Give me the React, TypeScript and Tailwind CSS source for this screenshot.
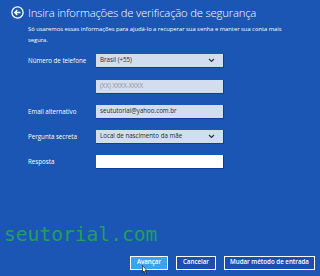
const font = { fontFamily: '"Open Sans", "Noto Sans", sans-serif' };

function Chevron() {
  return (
    <svg width="7" height="5" viewBox="0 0 7 5" className="shrink-0">
      <path d="M1 1 L3.5 3.5 L6 1" fill="none" stroke="#333" strokeWidth="1.2" />
    </svg>
  );
}

function Field({ value, placeholder, select, white }: { value?: string; placeholder?: string; select?: boolean; white?: boolean }) {
  return (
    <div
      className={`w-[128px] h-[14px] flex items-center justify-between pl-[4px] pr-[8px] border-b border-r border-[#0d3c99] ${
        white ? "bg-white" : "bg-[#d2ddf0]"
      }`}
    >
      <span className={`text-[6.2px] leading-none ${placeholder ? "text-[#8a8f99]" : "text-[#2a2a2a]"}`}>
        {value ?? placeholder}
      </span>
      {select && <Chevron />}
    </div>
  );
}

export default function App() {
  const rows: { label: string; field: JSX.Element; mt: string }[] = [
    { label: "Número de telefone", field: <Field value="Brasil (+55)" select />, mt: "mt-0" },
    { label: "", field: <Field placeholder="(XX) XXXX-XXXX" />, mt: "mt-[12px]" },
    { label: "Email alternativo", field: <Field value="seututorial@yahoo.com.br" />, mt: "mt-[11px]" },
    { label: "Pergunta secreta", field: <Field value="Local de nascimento da mãe" select />, mt: "mt-[11px]" },
    { label: "Resposta", field: <Field white />, mt: "mt-[11px]" },
  ];

  return (
    <div className="w-[320px] h-[276px] bg-[#1b56b4] text-white flex flex-col overflow-hidden" style={font}>
      {/* header */}
      <div className="flex items-center gap-[4px] pl-[11px] pt-[6px]">
        <svg width="13" height="13" viewBox="0 0 13 13" className="shrink-0">
          <circle cx="6.5" cy="6.5" r="5.6" fill="none" stroke="white" strokeWidth="1.3" />
          <path d="M9.5 6.5 H4 M6.3 4 L3.8 6.5 L6.3 9" fill="none" stroke="white" strokeWidth="1.4" />
        </svg>
        <h1 className="text-[11.3px] font-light leading-none tracking-[-0.2px]">
          Insira informações de verificação de segurança
        </h1>
      </div>
      <p className="pl-[28px] pr-[20px] mt-[5px] text-[5.8px] leading-[11px]">
        Só usaremos essas informações para ajudá-lo a recuperar sua senha e manter sua conta mais segura.
      </p>

      {/* form */}
      <div className="flex flex-col pl-[28px] mt-[8px]">
        {rows.map((r, i) => (
          <div key={i} className={`flex items-center ${r.mt}`}>
            <span className="w-[68px] text-[6.2px] leading-none">{r.label}</span>
            {r.field}
          </div>
        ))}
      </div>

      {/* watermark */}
      <div
        className="pl-[4px] mt-[56px] text-[19.6px] leading-none text-[#1fa05c]"
        style={{ fontFamily: '"DejaVu Sans Mono", "Liberation Mono", monospace' }}
      >
        seutorial.com
      </div>

      {/* buttons */}
      <div className="flex justify-end gap-[8px] pr-[5px] mt-[11px]">
        <button className="relative w-[38px] h-[14px] border border-white bg-[#3aa3f1] text-[6.2px] font-semibold leading-none">
          Avançar
          <svg width="6" height="9" viewBox="0 0 6 9" className="absolute left-[11px] top-[8px]">
            <path d="M0.5 0.5 V7.5 L2 6 L3.2 8.5 L4.2 8 L3 5.6 L5 5.6 Z" fill="white" stroke="black" strokeWidth="0.6" />
          </svg>
        </button>
        <button className="w-[40px] h-[14px] border border-white bg-[#1b4eae] text-[6.2px] font-semibold leading-none">
          Cancelar
        </button>
        <button className="w-[91px] h-[14px] border border-white bg-[#1b4eae] text-[6.2px] font-semibold leading-none">
          Mudar método de entrada
        </button>
      </div>
    </div>
  );
}
